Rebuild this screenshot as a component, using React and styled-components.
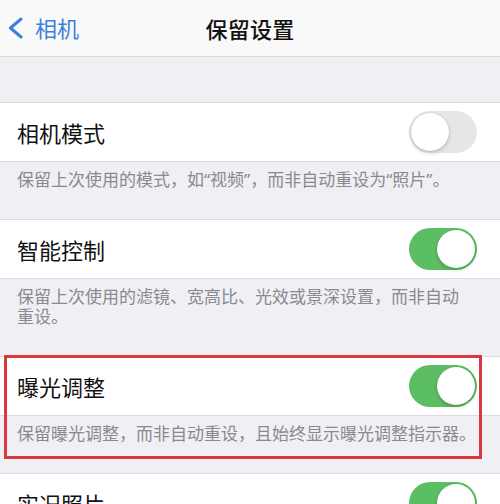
import React from "react";
import styled, { createGlobalStyle } from "styled-components";

const Global = createGlobalStyle`
  html, body {
    margin: 0;
    padding: 0;
    background: #f0eff4;
  }
  body {
    font-family: "Noto Sans", "Noto Sans CJK SC", sans-serif;
    -webkit-font-smoothing: antialiased;
  }
`;

const Page = styled.div`
  width: 500px;
  min-height: 504px;
  background: #f0eff4;
  overflow: hidden;
`;

const NavBar = styled.header`
  height: 56px;
  background: #f9f9f9;
  border-bottom: 1px solid #d9d9dc;
  display: grid;
  grid-template-columns: 1fr auto 1fr;
  align-items: center;
`;

const BackButton = styled.div`
  display: flex;
  align-items: center;
  gap: 10px;
  padding-left: 7px;
  color: #3d7fdc;
  font-size: 22px;
  line-height: 1;
`;

const Title = styled.h1`
  margin: 0;
  font-size: 22px;
  font-weight: 500;
  color: #111;
  letter-spacing: 0.3px;
`;

const Groups = styled.main`
  padding-top: 45px;
`;

const Group = styled.section`
  position: relative;
  ${(p) =>
    p.$highlight &&
    `
    &::after {
      content: "";
      position: absolute;
      top: -1px;
      left: 4px;
      right: 18px;
      bottom: 14px;
      border: 3px solid #d8393f;
      pointer-events: none;
    }
  `}
`;

const Row = styled.div`
  height: 58px;
  background: #fff;
  border-top: 1px solid #dcdce0;
  border-bottom: 1px solid #dcdce0;
  display: flex;
  align-items: center;
  justify-content: space-between;
  padding: 0 23px 0 17px;
`;

const Label = styled.span`
  font-size: 22px;
  color: #111;
`;

const Footer = styled.p`
  margin: 0;
  padding: 8px 8px 29px 17px;
  font-size: 17px;
  line-height: 20px;
  color: #8a8a8e;
`;

const Line = styled.span`
  display: block;
  white-space: nowrap;
`;

const Track = styled.div`
  width: 68px;
  height: 42px;
  border-radius: 21px;
  box-sizing: border-box;
  background: ${(p) => (p.$on ? "#5cbe62" : "#e6e6e8")};
  display: flex;
  align-items: center;
  justify-content: ${(p) => (p.$on ? "flex-end" : "flex-start")};
  padding: 2px;
`;

const Knob = styled.div`
  width: 38px;
  height: 38px;
  border-radius: 50%;
  background: #fff;
  box-shadow: 0 2px 4px rgba(0, 0, 0, 0.18), 0 0 0 0.5px rgba(0, 0, 0, 0.08);
`;

const Toggle = ({ on }) => (
  <Track $on={on}>
    <Knob />
  </Track>
);

const Chevron = () => (
  <svg width="18" height="22" viewBox="0 0 18 22" fill="none">
    <path
      d="M14 2 L3.5 11 L14 20"
      stroke="#3d7fdc"
      strokeWidth="3"
      strokeLinecap="round"
      strokeLinejoin="round"
    />
  </svg>
);

const settings = [
  {
    label: "相机模式",
    on: false,
    note: ["保留上次使用的模式，如“视频”，而非自动重设为“照片”。"],
  },
  {
    label: "智能控制",
    on: true,
    note: ["保留上次使用的滤镜、宽高比、光效或景深设置，而非自动", "重设。"],
  },
  {
    label: "曝光调整",
    on: true,
    note: ["保留曝光调整，而非自动重设，且始终显示曝光调整指示器。"],
    highlight: true,
  },
  { label: "实况照片", on: true, note: [] },
];

export default function App() {
  return (
    <Page>
      <Global />
      <NavBar>
        <BackButton>
          <Chevron />
          <span>相机</span>
        </BackButton>
        <Title>保留设置</Title>
        <div />
      </NavBar>
      <Groups>
        {settings.map((s) => (
          <Group key={s.label} $highlight={s.highlight}>
            <Row>
              <Label>{s.label}</Label>
              <Toggle on={s.on} />
            </Row>
            {s.note.length > 0 && (
              <Footer>
                {s.note.map((line) => (
                  <Line key={line}>{line}</Line>
                ))}
              </Footer>
            )}
          </Group>
        ))}
      </Groups>
    </Page>
  );
}
